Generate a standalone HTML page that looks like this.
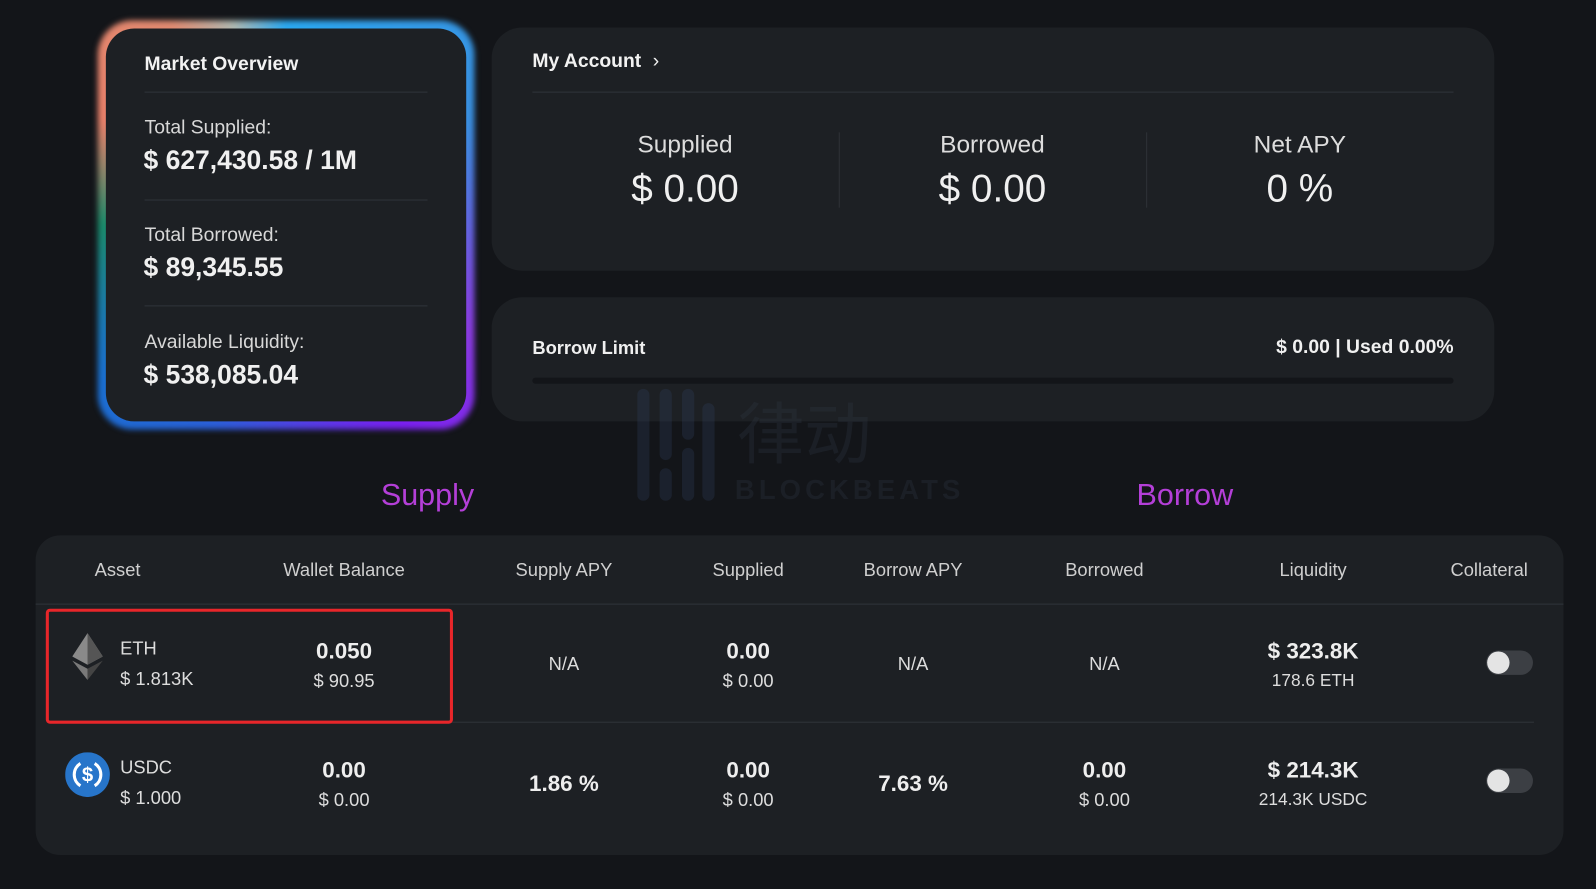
<!DOCTYPE html>
<html><head><meta charset="utf-8"><style>
*{margin:0;padding:0;box-sizing:border-box}
html,body{width:1596px;height:889px;overflow:hidden;background:#131519;font-family:"Liberation Sans","Noto Sans CJK SC",sans-serif;color:#e8e8e8}
#w{position:absolute;left:0;top:0;width:1568px;height:873px;transform:scale(1.0179);transform-origin:0 0}
.a{position:absolute}
.t{margin-top:2px}
.card{background:#1d2024}
.glow{left:96px;top:20px;width:370px;height:402px;border-radius:34px;background:conic-gradient(from 0deg at 50% 50%,#2aa8f0 0deg,#3a8fe0 60deg,#8a3ce0 120deg,#7a1ff0 150deg,#2b5fd8 200deg,#1a6fd0 230deg,#1a8a6a 270deg,#e8806a 300deg,#e08a70 330deg,#b0b8b0 345deg,#2aa8f0 360deg);filter:blur(3px)}
.mo{left:104px;top:28px;width:354px;height:386px;border-radius:28px}
.lbl{font-size:19px;color:#d8d8d8;margin-top:2px}
.big{font-size:26px;font-weight:bold;color:#f0f0f0;margin-top:1px}
.hr{height:1px;background:#30343a}
.c{text-align:center;transform:translateX(-50%)}
.th{top:550px;font-size:18px;color:#cfcfcf}
.v{font-size:22px;font-weight:bold;color:#eee;margin-top:1px}
.s{font-size:18px;color:#ddd;margin-top:2px}
.tg{width:46px;height:24px;border-radius:12px;background:#3c3f44}
.tg:after{content:"";position:absolute;left:1px;top:1px;width:22px;height:22px;border-radius:50%;background:#e4e4e4}
</style></head><body><div id="w">
<div class="a glow"></div>
<div class="a card mo"></div>
<div class="a t" style="left:142px;top:51px;font-size:19px;font-weight:bold;color:#f2f2f2">Market Overview</div>
<div class="a hr" style="left:142px;top:90px;width:278px"></div>
<div class="a lbl" style="left:142px;top:113px">Total Supplied:</div>
<div class="a big" style="left:141px;top:141px">$ 627,430.58 / 1M</div>
<div class="a hr" style="left:142px;top:196px;width:278px"></div>
<div class="a lbl" style="left:142px;top:219px">Total Borrowed:</div>
<div class="a big" style="left:141px;top:246px">$ 89,345.55</div>
<div class="a hr" style="left:142px;top:300px;width:278px"></div>
<div class="a lbl" style="left:142px;top:324px">Available Liquidity:</div>
<div class="a big" style="left:141px;top:352px">$ 538,085.04</div>

<div class="a card" style="left:483px;top:27px;width:985px;height:239px;border-radius:30px"></div>
<div class="a t" style="left:523px;top:48px;font-size:19px;font-weight:bold;color:#f2f2f2">My Account <span style="font-weight:normal;margin-left:6px">&#8250;</span></div>
<div class="a hr" style="left:523px;top:90px;width:905px"></div>
<div class="a" style="left:824px;top:130px;width:1px;height:74px;background:#2e3237"></div>
<div class="a" style="left:1126px;top:130px;width:1px;height:74px;background:#2e3237"></div>
<div class="a c" style="left:673px;top:129px;font-size:24px;color:#ddd">Supplied</div>
<div class="a c" style="left:673px;top:165px;font-size:38px;color:#f0f0f0">$ 0.00</div>
<div class="a c" style="left:975px;top:129px;font-size:24px;color:#ddd">Borrowed</div>
<div class="a c" style="left:975px;top:165px;font-size:38px;color:#f0f0f0">$ 0.00</div>
<div class="a c" style="left:1277px;top:129px;font-size:24px;color:#ddd">Net APY</div>
<div class="a c" style="left:1277px;top:165px;font-size:38px;color:#f0f0f0">0 %</div>

<div class="a card" style="left:483px;top:292px;width:985px;height:122px;border-radius:30px"></div>
<div class="a" style="left:523px;top:332px;font-size:18px;font-weight:bold;color:#f0f0f0">Borrow Limit</div>
<div class="a" style="right:140px;top:331px;font-size:19px;font-weight:bold;color:#f0f0f0">$ 0.00 | Used 0.00%</div>
<div class="a" style="left:523px;top:371px;width:905px;height:6px;border-radius:3px;background:#131519"></div>

<div class="a" style="left:626px;top:380px;opacity:.35">
<svg width="320" height="115" viewBox="0 0 320 115"><g fill="#2c3b55"><rect x="0" y="2" width="12" height="110" rx="6"/><rect x="22" y="2" width="12" height="70" rx="6"/><rect x="22" y="80" width="12" height="32" rx="6"/><rect x="44" y="2" width="12" height="50" rx="6"/><rect x="44" y="60" width="12" height="52" rx="6"/><rect x="64" y="16" width="12" height="96" rx="6"/></g>
<text x="98" y="70" font-size="66" fill="#2c3440" font-family="Noto Sans CJK SC,sans-serif">律动</text>
<text x="96" y="110" font-size="27" fill="#2c3440" font-weight="bold" letter-spacing="4" font-family="Liberation Sans,sans-serif">BLOCKBEATS</text></svg></div>

<div class="a c" style="left:420px;top:470px;font-size:30px;color:#b43fd8">Supply</div>
<div class="a c" style="left:1164px;top:470px;font-size:30px;color:#b43fd8">Borrow</div>

<div class="a card" style="left:35px;top:526px;width:1501px;height:314px;border-radius:24px"></div>
<div class="a th" style="left:93px">Asset</div>
<div class="a th c" style="left:338px">Wallet Balance</div>
<div class="a th c" style="left:554px">Supply APY</div>
<div class="a th c" style="left:735px">Supplied</div>
<div class="a th c" style="left:897px">Borrow APY</div>
<div class="a th c" style="left:1085px">Borrowed</div>
<div class="a th c" style="left:1290px">Liquidity</div>
<div class="a th c" style="left:1463px">Collateral</div>
<div class="a hr" style="left:35px;top:593px;width:1501px"></div>
<div class="a hr" style="left:46px;top:709px;width:1461px"></div>

<div class="a" style="left:45px;top:598px;width:400px;height:113px;border:3px solid #e8262a;border-radius:4px"></div>
<svg class="a" style="left:71px;top:622px" width="30" height="46" viewBox="0 0 30 46"><polygon points="15,0 0,23 15,31 30,23" fill="#8a8a8a"/><polygon points="15,0 15,31 30,23" fill="#555"/><polygon points="0,27 15,46 15,35" fill="#7a7a7a"/><polygon points="30,27 15,46 15,35" fill="#444"/></svg>
<div class="a s" style="left:118px;top:625px">ETH</div>
<div class="a s" style="left:118px;top:655px">$ 1.813K</div>
<div class="a v c" style="left:338px;top:626px">0.050</div>
<div class="a s c" style="left:338px;top:657px">$ 90.95</div>
<div class="a s c" style="left:554px;top:640px">N/A</div>
<div class="a v c" style="left:735px;top:626px">0.00</div>
<div class="a s c" style="left:735px;top:657px">$ 0.00</div>
<div class="a s c" style="left:897px;top:640px">N/A</div>
<div class="a s c" style="left:1085px;top:640px">N/A</div>
<div class="a v c" style="left:1290px;top:626px">$ 323.8K</div>
<div class="a c" style="left:1290px;top:659px;font-size:17px;color:#ddd">178.6 ETH</div>
<div class="a tg" style="left:1460px;top:639px"></div>

<svg class="a" style="left:64px;top:739px" width="44" height="44" viewBox="0 0 44 44"><circle cx="22" cy="22" r="22" fill="#2775ca"/><path d="M15 11a13 13 0 0 0 0 22M29 11a13 13 0 0 1 0 22" stroke="#fff" stroke-width="3" fill="none"/><text x="22" y="29" font-size="20" font-weight="bold" fill="#fff" text-anchor="middle" font-family="Liberation Sans,sans-serif">$</text></svg>
<div class="a s" style="left:118px;top:742px">USDC</div>
<div class="a s" style="left:118px;top:772px">$ 1.000</div>
<div class="a v c" style="left:338px;top:743px">0.00</div>
<div class="a s c" style="left:338px;top:774px">$ 0.00</div>
<div class="a v c" style="left:554px;top:756px">1.86 %</div>
<div class="a v c" style="left:735px;top:743px">0.00</div>
<div class="a s c" style="left:735px;top:774px">$ 0.00</div>
<div class="a v c" style="left:897px;top:756px">7.63 %</div>
<div class="a v c" style="left:1085px;top:743px">0.00</div>
<div class="a s c" style="left:1085px;top:774px">$ 0.00</div>
<div class="a v c" style="left:1290px;top:743px">$ 214.3K</div>
<div class="a c" style="left:1290px;top:776px;font-size:17px;color:#ddd">214.3K USDC</div>
<div class="a tg" style="left:1460px;top:755px"></div>
</div></body></html>
